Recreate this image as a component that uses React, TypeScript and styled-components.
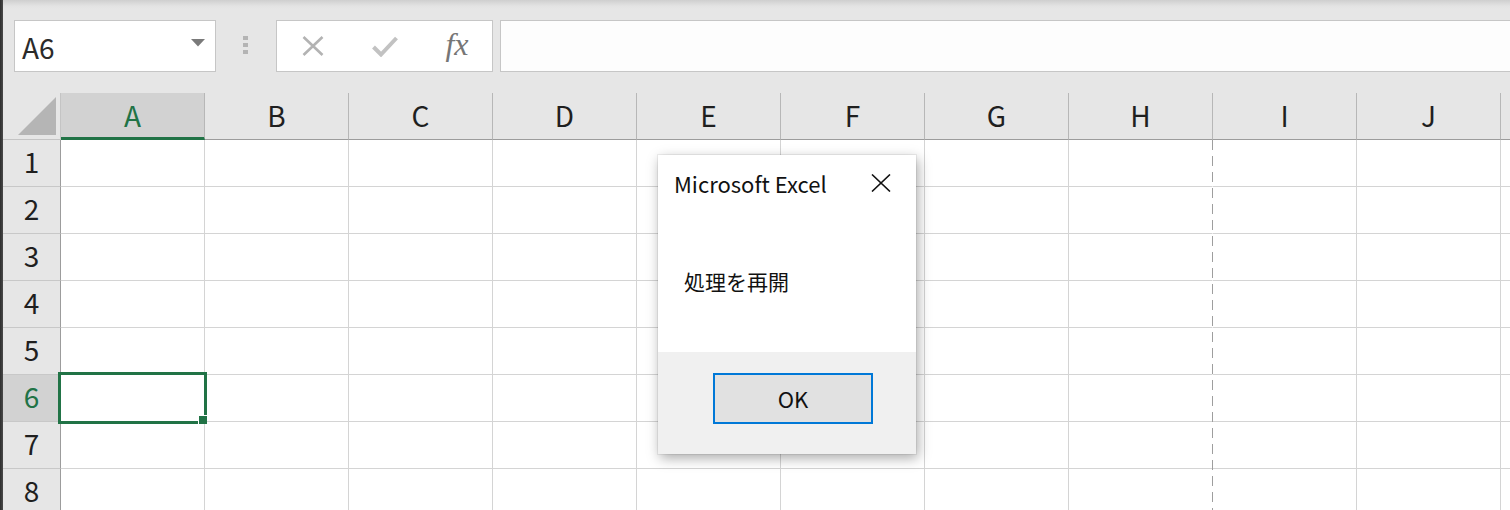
import React from "react";
import styled, { createGlobalStyle } from "styled-components";

const GREEN = "#217346";
const UI_FONT = `"Noto Sans CJK JP", "Noto Sans", sans-serif`;

const columns = ["A", "B", "C", "D", "E", "F", "G", "H", "I", "J", ""];
const rows = [1, 2, 3, 4, 5, 6, 7, 8];
const selectedCol = 0;
const selectedRow = 6;
const pageBreakAfter = 7; // column H

export default function App() {
  return (
    <>
      <GlobalStyle />
      <Frame>
        <LeftEdge />
        <Main>
          <Toolbar>
            <NameBox>
              <NameText>A6</NameText>
              <Caret width="14" height="8" viewBox="0 0 14 8">
                <path d="M0 0 H14 L7 7.5 Z" fill="#7a7a7a" />
              </Caret>
            </NameBox>
            <Grip>
              <span />
              <span />
              <span />
            </Grip>
            <FormulaButtons>
              <IconSlot>
                <svg width="22" height="20" viewBox="0 0 22 20">
                  <path
                    d="M1.5 1 L20.5 19 M20.5 1 L1.5 19"
                    stroke="#b3b3b3"
                    strokeWidth="2.6"
                    fill="none"
                  />
                </svg>
              </IconSlot>
              <IconSlot>
                <svg width="26" height="21" viewBox="0 0 26 21">
                  <path
                    d="M1.5 11 L9 18.5 L24.5 2"
                    stroke="#c2c2c2"
                    strokeWidth="4"
                    fill="none"
                  />
                </svg>
              </IconSlot>
              <IconSlot>
                <FxText>fx</FxText>
              </IconSlot>
            </FormulaButtons>
            <FormulaInput />
          </Toolbar>

          <Sheet>
            <Corner>
              <svg width="40" height="40" viewBox="0 0 40 40">
                <path d="M1 39 L39 1 V39 Z" fill="#b5b5b5" />
              </svg>
            </Corner>
            {columns.map((c, i) => (
              <ColHeader key={i} $active={i === selectedCol}>
                {c}
              </ColHeader>
            ))}

            {rows.map((r) => (
              <React.Fragment key={r}>
                <RowHeader $row={r + 1} $active={r === selectedRow}>
                  {r}
                </RowHeader>
                {columns.map((_, i) => (
                  <Cell
                    key={i}
                    $row={r + 1}
                    $col={i + 2}
                    $noRight={i === pageBreakAfter}
                  />
                ))}
              </React.Fragment>
            ))}

            <PageBreak />
            <Selection>
              <FillHandle />
            </Selection>
          </Sheet>
        </Main>

        <Dialog>
          <DialogBody>
            <TitleRow>
              <Title>Microsoft Excel</Title>
              <svg width="20" height="18" viewBox="0 0 20 18">
                <path
                  d="M1 0.5 L19 17.5 M19 0.5 L1 17.5"
                  stroke="#111"
                  strokeWidth="1.6"
                  fill="none"
                />
              </svg>
            </TitleRow>
            <Message>処理を再開</Message>
          </DialogBody>
          <DialogFooter>
            <OkButton>OK</OkButton>
          </DialogFooter>
        </Dialog>
      </Frame>
    </>
  );
}

const GlobalStyle = createGlobalStyle`
  html, body {
    margin: 0;
    padding: 0;
    overflow: hidden;
    background: #e6e6e6;
    font-family: ${UI_FONT};
  }
  * {
    box-sizing: border-box;
  }
`;

const Frame = styled.div`
  position: relative;
  display: flex;
  width: 1510px;
  height: 510px;
  overflow: hidden;
`;

const LeftEdge = styled.div`
  width: 3px;
  flex-shrink: 0;
  background: linear-gradient(to right, #2e2e2e, #4a4a4a);
`;

const Main = styled.div`
  flex: 1;
  display: flex;
  flex-direction: column;
  min-width: 0;
`;

const Toolbar = styled.div`
  height: 93px;
  flex-shrink: 0;
  display: flex;
  align-items: flex-start;
  padding: 20px 0 0 11px;
  background: linear-gradient(to bottom, #cfcfcf 0px, #e3e3e3 6px, #e6e6e6 9px);
`;

const NameBox = styled.div`
  width: 202px;
  height: 52px;
  display: flex;
  align-items: center;
  justify-content: space-between;
  padding: 0 10px 0 7px;
  background: #fff;
  border: 1px solid #c6c6c6;
`;

const NameText = styled.span`
  font-size: 28px;
  color: #2b2b2b;
  line-height: 1;
  margin-top: 2px;
`;

const Caret = styled.svg`
  margin-top: -7px;
`;

const Grip = styled.div`
  width: 5px;
  margin: 16px 28px 0 27px;
  display: flex;
  flex-direction: column;
  gap: 3px;

  span {
    width: 5px;
    height: 4px;
    background: #b4b4b4;
  }
`;

const FormulaButtons = styled.div`
  width: 217px;
  height: 52px;
  display: grid;
  grid-template-columns: repeat(3, 72px);
  background: #fff;
  border: 1px solid #c6c6c6;
`;

const IconSlot = styled.div`
  display: flex;
  align-items: center;
  justify-content: center;
`;

const FxText = styled.span`
  font-family: "Liberation Serif", "DejaVu Serif", serif;
  font-style: italic;
  font-size: 32px;
  color: #767676;
  line-height: 1;
  margin-top: -4px;
`;

const FormulaInput = styled.div`
  flex: 1;
  height: 52px;
  margin-left: 7px;
  background: #fdfdfd;
  border: 1px solid #c6c6c6;
  border-right: none;
`;

const Sheet = styled.div`
  display: grid;
  grid-template-columns: 58px repeat(11, 144px);
  grid-template-rows: repeat(9, 47px);
  background: #fff;
`;

const Corner = styled.div`
  display: flex;
  align-items: flex-end;
  justify-content: flex-end;
  padding: 0 3px 3px 0;
  background: #e6e6e6;
  border-right: 1px solid #c4c4c4;
  border-bottom: 1px solid #c4c4c4;
`;

const ColHeader = styled.div<{ $active?: boolean }>`
  display: flex;
  align-items: center;
  justify-content: center;
  font-size: 28px;
  line-height: 1;
  padding-bottom: ${({ $active }) => ($active ? "1px" : "3px")};
  color: ${({ $active }) => ($active ? GREEN : "#1f1f1f")};
  background: ${({ $active }) => ($active ? "#d2d2d2" : "#e6e6e6")};
  border-right: 1px solid #b7b7b7;
  border-bottom: ${({ $active }) =>
    $active ? `3px solid ${GREEN}` : "1px solid #9c9c9c"};
`;

const RowHeader = styled.div<{ $active?: boolean; $row: number }>`
  grid-row: ${({ $row }) => $row};
  grid-column: 1;
  display: flex;
  align-items: center;
  justify-content: center;
  font-size: 28px;
  line-height: 1;
  padding-bottom: 4px;
  color: ${({ $active }) => ($active ? GREEN : "#1f1f1f")};
  background: ${({ $active }) => ($active ? "#d2d2d2" : "#e6e6e6")};
  border-right: 1px solid #9c9c9c;
  border-bottom: 1px solid #c8c8c8;
`;

const Cell = styled.div<{ $noRight?: boolean; $row: number; $col: number }>`
  grid-row: ${({ $row }) => $row};
  grid-column: ${({ $col }) => $col};
  border-right: 1px solid ${({ $noRight }) => ($noRight ? "#fff" : "#d4d4d4")};
  border-bottom: 1px solid #d4d4d4;
`;

const PageBreak = styled.div`
  grid-column: 9;
  grid-row: 2 / span 8;
  justify-self: end;
  width: 1px;
  z-index: 1;
  background: repeating-linear-gradient(
    to bottom,
    #9e9e9e 0px,
    #9e9e9e 10px,
    transparent 10px,
    transparent 16px
  );
`;

const Selection = styled.div`
  grid-column: 2;
  grid-row: ${selectedRow + 1};
  position: relative;
  z-index: 2;
  margin: -3px -2px -2px -3px;
  border: 3px solid ${GREEN};
`;

const FillHandle = styled.div`
  position: absolute;
  right: -3px;
  bottom: -3px;
  width: 9px;
  height: 9px;
  background: ${GREEN};
  border-left: 1px solid #fff;
  border-top: 1px solid #fff;
`;

const Dialog = styled.div`
  position: absolute;
  left: 658px;
  top: 155px;
  width: 258px;
  height: 299px;
  display: flex;
  flex-direction: column;
  background: #f0f0f0;
  box-shadow: 0 0 0 1px rgba(0, 0, 0, 0.06), 2px 4px 12px rgba(0, 0, 0, 0.34);
  z-index: 10;
`;

const DialogBody = styled.div`
  height: 197px;
  background: #fff;
  display: flex;
  flex-direction: column;
`;

const TitleRow = styled.div`
  display: flex;
  align-items: center;
  justify-content: space-between;
  padding: 12px 25px 0 16px;
  height: 43px;
`;

const Title = styled.span`
  font-size: 22px;
  color: #111;
  line-height: 1;
`;

const Message = styled.div`
  margin: 73px 0 0 26px;
  font-size: 21px;
  color: #111;
  line-height: 1;
`;

const DialogFooter = styled.div`
  flex: 1;
  display: flex;
  padding: 21px 0 0 55px;
`;

const OkButton = styled.button`
  appearance: none;
  width: 160px;
  height: 51px;
  padding: 0 0 2px;
  background: #e1e1e1;
  border: 2px solid #0078d7;
  font-family: ${UI_FONT};
  font-size: 22px;
  color: #111;
  cursor: pointer;
`;
